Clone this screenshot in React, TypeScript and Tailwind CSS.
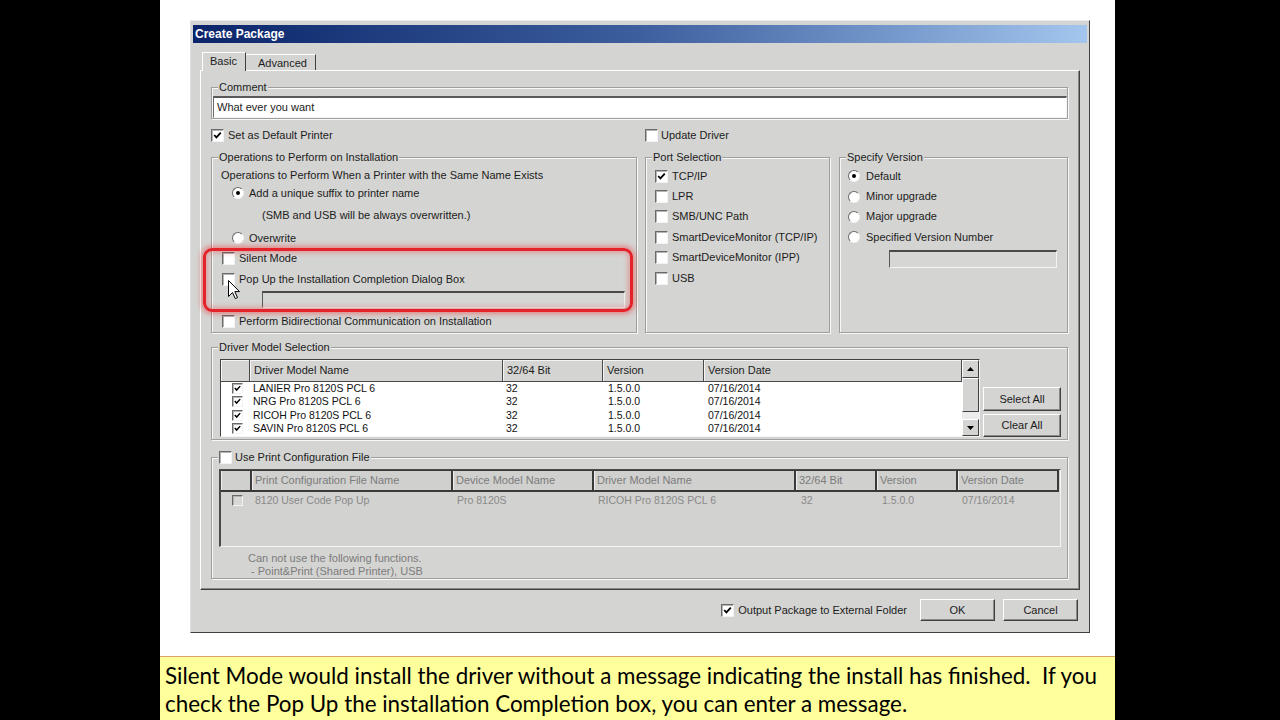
import React from "react";

function Check({ checked = false, small = false, disabled = false }: { checked?: boolean; small?: boolean; disabled?: boolean }) {
  return (
    <span
      className={`relative inline-block shrink-0 ${small ? "w-[11px] h-[11px]" : "w-[13px] h-[13px]"} ${
        disabled ? "bg-[#d8d8d6]" : "bg-white"
      } border-t border-l border-t-[#6a6a6a] border-l-[#6a6a6a] border-r border-b border-r-[#f2f2f2] border-b-[#f2f2f2] shadow-[inset_1px_1px_0_#b4b4b4]`}
    >
      {checked && (
        <svg viewBox="0 0 11 11" className="absolute inset-0 w-full h-full">
          <path d="M2.2 5 L4.4 7.4 L8.8 2.6" fill="none" stroke="#000" strokeWidth="1.8" />
        </svg>
      )}
    </span>
  );
}

function Radio({ checked = false }: { checked?: boolean }) {
  return (
    <span className="relative inline-flex items-center justify-center w-[12px] h-[12px] shrink-0 rounded-full bg-white border border-t-[#6a6a6a] border-l-[#6a6a6a] border-r-[#f2f2f2] border-b-[#f2f2f2]">
      {checked && <span className="w-[4px] h-[4px] rounded-full bg-black" />}
    </span>
  );
}

function Group({ label, className, children }: { label: React.ReactNode; className: string; children?: React.ReactNode }) {
  return (
    <div className={`relative border border-[#9e9e9c] shadow-[inset_1px_1px_0_#f8f8f8,1px_1px_0_#f8f8f8] ${className}`}>
      <div className="absolute -top-[7.5px] left-[6px] px-[1px] bg-[#d4d4d2] leading-[13px] flex items-center gap-[3px] whitespace-nowrap">
        {label}
      </div>
      {children}
    </div>
  );
}

function Button({ children, className }: { children: React.ReactNode; className: string }) {
  return (
    <div
      className={`flex items-center justify-center bg-[#d4d4d2] border border-t-white border-l-white border-r-[#404040] border-b-[#404040] shadow-[inset_-1px_-1px_0_#8a8a8a] ${className}`}
    >
      {children}
    </div>
  );
}

function SunkenBox({ className }: { className: string }) {
  return (
    <div
      className={`bg-[#d6d6d4] border-t-2 border-l border-t-[#4a4a4a] border-l-[#5a5a5a] border-r border-b border-r-[#f4f4f4] border-b-[#f4f4f4] ${className}`}
    />
  );
}

function ScrollBtn({ up, className }: { up: boolean; className: string }) {
  return (
    <div
      className={`flex items-center justify-center bg-[#d4d4d2] border border-t-white border-l-white border-r-[#404040] border-b-[#404040] ${className}`}
    >
      <svg width="7" height="4" viewBox="0 0 7 4">
        {up ? <path d="M0 4 L3.5 0 L7 4 Z" fill="#000" /> : <path d="M0 0 L3.5 4 L7 0 Z" fill="#000" />}
      </svg>
    </div>
  );
}

const drivers = ["LANIER Pro 8120S PCL 6", "NRG Pro 8120S PCL 6", "RICOH Pro 8120S PCL 6", "SAVIN Pro 8120S PCL 6"];

function HeadCell({ children, className }: { children?: React.ReactNode; className: string }) {
  return (
    <div
      className={`h-full flex items-center pl-[4px] shrink-0 border-r border-b border-r-[#4a4a4a] border-b-[#4a4a4a] shadow-[inset_1px_1px_0_#f4f4f4] bg-[#d4d4d2] whitespace-nowrap ${className}`}
    >
      {children}
    </div>
  );
}

function DarkHeadCell({ children, className }: { children?: React.ReactNode; className: string }) {
  return (
    <div
      className={`h-full flex items-center pl-[3px] shrink-0 border-r-2 border-r-[#3a3a3a] shadow-[inset_1px_0_0_#efefef] bg-[#d0d0ce] whitespace-nowrap text-[#7c7c7c] ${className}`}
    >
      {children}
    </div>
  );
}

export default function App() {
  return (
    <div className="w-[1280px] h-[720px] flex bg-black overflow-hidden">
      <div className="w-[160px] shrink-0 bg-black" />
      <div className="w-[955px] shrink-0 flex flex-col bg-white">
        <div className="h-[656px] shrink-0 pt-[20px] pl-[30px]">
          {/* Dialog */}
          <div className="w-[900px] h-[613px] flex flex-col bg-[#d4d4d2] border border-t-[#ececec] border-l-[#dedede] border-r-[#404040] border-b-[#404040] px-[2px] pt-[4px] font-['Liberation_Sans',Arial,sans-serif] text-[11px] leading-[13px] text-[#1c1c1c]">
            {/* Title bar */}
            <div className="h-[18px] shrink-0 flex items-center pl-[2px] bg-gradient-to-r from-[#0b246a] via-[#3d5f9e] to-[#a3c6ee]">
              <span className="text-white font-bold text-[12px]">Create Package</span>
            </div>

            {/* Tabs */}
            <div className="mt-[9px] h-[18px] shrink-0 flex items-end ml-[9px]">
              <div className="relative z-10 h-[19px] -mb-px w-[44px] pl-[7px] pt-[2px] bg-[#d4d4d2] border-t border-l border-t-white border-l-white border-r border-r-[#404040]">
                Basic
              </div>
              <div className="h-[16px] w-[70px] pl-[12px] pt-[2px] border-t border-t-white border-r border-r-[#404040]">Advanced</div>
            </div>

            {/* Tab panel */}
            <div className="ml-[7px] w-[880px] h-[520px] shrink-0 flex flex-col border border-t-white border-l-white border-r-[#404040] border-b-[#404040] shadow-[inset_-1px_-1px_0_#8a8a8a] pl-[10px] pt-[16px]">
              {/* Comment */}
              <Group label="Comment" className="w-[857px] h-[32px] shrink-0 pt-[8px] pl-[1px]">
                <div className="h-[22px] bg-white border-t-2 border-l border-t-[#5a5a5a] border-l-[#6a6a6a] border-r border-b border-r-[#f4f4f4] border-b-[#f4f4f4] flex items-center pl-[3px]">
                  What ever you want
                </div>
              </Group>

              {/* checkbox row */}
              <div className="mt-[9.5px] h-[13px] shrink-0 flex items-center">
                <div className="w-[434px] flex items-center gap-[4px]">
                  <Check checked />
                  <span>Set as Default Printer</span>
                </div>
                <div className="flex items-center gap-[3px]">
                  <Check />
                  <span>Update Driver</span>
                </div>
              </div>

              {/* three groups */}
              <div className="mt-[15.5px] h-[176px] shrink-0 flex">
                <Group label="Operations to Perform on Installation" className="w-[426px] h-full flex flex-col pt-[10px]">
                  <div className="h-[14px] flex items-center ml-[9px]">Operations to Perform When a Printer with the Same Name Exists</div>
                  <div className="mt-[4px] h-[14px] flex items-center ml-[20px] gap-[5px]">
                    <Radio checked />
                    <span>Add a unique suffix to printer name</span>
                  </div>
                  <div className="mt-[8px] h-[14px] flex items-center ml-[50px]">(SMB and USB will be always overwritten.)</div>
                  <div className="mt-[9px] h-[14px] flex items-center ml-[20px] gap-[5px]">
                    <Radio />
                    <span>Overwrite</span>
                  </div>
                  <div className="mt-[6px] h-[14px] flex items-center ml-[10px] gap-[4px]">
                    <Check />
                    <span>Silent Mode</span>
                  </div>
                  <div className="mt-[7px] h-[14px] flex items-center ml-[10px] gap-[4px]">
                    <Check />
                    <span>Pop Up the Installation Completion Dialog Box</span>
                  </div>
                  <SunkenBox className="mt-[5px] h-[17px] ml-[50px] w-[363px] shrink-0" />
                  <div className="mt-[6px] h-[14px] flex items-center ml-[10px] gap-[4px]">
                    <Check />
                    <span>Perform Bidirectional Communication on Installation</span>
                  </div>

                  {/* highlight */}
                  <div className="absolute left-[-9px] top-[90px] w-[430px] h-[64px] rounded-[9px] border-[3px] border-[#e4222a] shadow-[0_0_5px_2px_rgba(240,40,40,0.45),inset_0_0_5px_2px_rgba(240,40,40,0.3)] pointer-events-none" />
                  {/* cursor */}
                  <svg className="absolute left-[16px] top-[122px]" width="13" height="20" viewBox="0 0 13 20">
                    <path d="M0.5 0.5 L0.5 16.5 L4.5 12.5 L7.3 18.6 L9.5 17.6 L6.8 11.6 L11.5 11.6 Z" fill="#fff" stroke="#000" strokeWidth="1" strokeLinejoin="miter" />
                  </svg>
                </Group>

                <Group label="Port Selection" className="ml-[8px] w-[185px] h-full flex flex-col pt-[8px]">
                  {[
                    ["TCP/IP", true],
                    ["LPR", false],
                    ["SMB/UNC Path", false],
                    ["SmartDeviceMonitor (TCP/IP)", false],
                    ["SmartDeviceMonitor (IPP)", false],
                    ["USB", false],
                  ].map(([t, c]) => (
                    <div key={t as string} className="h-[20.4px] shrink-0 flex items-center ml-[9px] gap-[4px]">
                      <Check checked={c as boolean} />
                      <span>{t as string}</span>
                    </div>
                  ))}
                </Group>

                <Group label="Specify Version" className="ml-[9px] w-[229px] h-full flex flex-col pt-[8px]">
                  {["Default", "Minor upgrade", "Major upgrade", "Specified Version Number"].map((t, i) => (
                    <div key={t} className="h-[20.4px] shrink-0 flex items-center ml-[8px] gap-[6px]">
                      <Radio checked={i === 0} />
                      <span>{t}</span>
                    </div>
                  ))}
                  <SunkenBox className="mt-[2.4px] ml-[49px] w-[168px] h-[18px] shrink-0" />
                </Group>
              </div>

              {/* Driver Model Selection */}
              <Group label="Driver Model Selection" className="mt-[14px] w-[857px] h-[93px] shrink-0 flex pl-[8px] pt-[11px]">
                <div className="w-[760px] h-[78px] shrink-0 flex border border-t-[#404040] border-l-[#404040] border-r-[#f4f4f4] border-b-[#f4f4f4]">
                  <div className="w-[741px] flex flex-col overflow-hidden">
                    <div className="h-[22px] shrink-0 flex">
                      <HeadCell className="w-[29px]" />
                      <HeadCell className="w-[253px]">Driver Model Name</HeadCell>
                      <HeadCell className="w-[100px]">32/64 Bit</HeadCell>
                      <HeadCell className="w-[101px]">Version</HeadCell>
                      <HeadCell className="w-[258px]">Version Date</HeadCell>
                    </div>
                    <div className="flex-1 bg-white overflow-hidden text-[10.5px] text-[#111]">
                      {drivers.map((d) => (
                        <div key={d} className="h-[13.3px] flex items-center">
                          <div className="w-[29px] h-full flex items-center pl-[11px]">
                            <Check checked small />
                          </div>
                          <div className="w-[253px] pl-[3px] whitespace-nowrap">{d}</div>
                          <div className="w-[100px] pl-[3px]">32</div>
                          <div className="w-[101px] pl-[5px]">1.5.0.0</div>
                          <div className="w-[258px] pl-[4px]">07/16/2014</div>
                        </div>
                      ))}
                      <div className="h-[13.3px] flex items-start pt-[1px]">
                        <div className="w-[29px] pl-[11px]">
                          <Check small />
                        </div>
                      </div>
                    </div>
                  </div>
                  <div className="w-[17px] h-full flex flex-col">
                    <ScrollBtn up className="h-[18px] shrink-0" />
                    <div className="h-[34px] shrink-0 bg-[#d4d4d2] border border-t-white border-l-white border-r-[#404040] border-b-[#404040]" />
                    <div className="flex-1 bg-[#ececec]" />
                    <ScrollBtn up={false} className="h-[17px] shrink-0" />
                  </div>
                </div>
                <div className="ml-[3px] w-[78px] flex flex-col pt-[28px] gap-[3px]">
                  <Button className="h-[24px] w-[78px]">Select All</Button>
                  <Button className="h-[23px] w-[78px]">Clear All</Button>
                </div>
              </Group>

              {/* Use Print Configuration File */}
              <Group
                label={
                  <>
                    <Check />
                    <span>Use Print Configuration File</span>
                  </>
                }
                className="mt-[17px] w-[857px] h-[122px] shrink-0 flex flex-col pl-[7px] pt-[11px]"
              >
                <div className="w-[842px] h-[78px] shrink-0 flex flex-col bg-[#d2d2d0] border-l-2 border-t border-l-[#4a4a4a] border-t-[#4a4a4a] border-r border-b border-r-[#f4f4f4] border-b-[#f4f4f4]">
                  <div className="h-[22px] shrink-0 flex border-t border-b-2 border-t-[#3a3a3a] border-b-[#3a3a3a] w-[838px]">
                    <DarkHeadCell className="w-[31px]" />
                    <DarkHeadCell className="w-[201px]">Print Configuration File Name</DarkHeadCell>
                    <DarkHeadCell className="w-[141px]">Device Model Name</DarkHeadCell>
                    <DarkHeadCell className="w-[202px]">Driver Model Name</DarkHeadCell>
                    <DarkHeadCell className="w-[81px]">32/64 Bit</DarkHeadCell>
                    <DarkHeadCell className="w-[81px]">Version</DarkHeadCell>
                    <DarkHeadCell className="w-[101px]">Version Date</DarkHeadCell>
                  </div>
                  <div className="h-[14px] mt-[1px] flex items-center text-[10.5px] text-[#8a8a8a] whitespace-nowrap">
                    <div className="w-[31px] h-full flex items-center pl-[11px]">
                      <Check small disabled />
                    </div>
                    <div className="w-[201px] pl-[3px]">8120 User Code Pop Up</div>
                    <div className="w-[141px] pl-[4px]">Pro 8120S</div>
                    <div className="w-[202px] pl-[4px]">RICOH Pro 8120S PCL 6</div>
                    <div className="w-[81px] pl-[5px]">32</div>
                    <div className="w-[81px] pl-[5px]">1.5.0.0</div>
                    <div className="w-[101px] pl-[4px]">07/16/2014</div>
                  </div>
                </div>
                <div className="mt-[4.5px] ml-[29px] text-[#7c7c7c] leading-[13px]">
                  <div>Can not use the following functions.</div>
                  <div>{"\u00a0- Point&Print (Shared Printer), USB"}</div>
                </div>
              </Group>
            </div>

            {/* Bottom buttons */}
            <div className="mt-[9px] h-[22px] shrink-0 flex items-center justify-end pr-[9px]">
              <div className="flex items-center gap-[4px]">
                <Check checked />
                <span>Output Package to External Folder</span>
              </div>
              <Button className="ml-[13px] w-[75px] h-[22px]">OK</Button>
              <Button className="ml-[8px] w-[75px] h-[22px]">Cancel</Button>
            </div>
          </div>
        </div>

        {/* Caption */}
        <div className="flex-1 bg-[#ffff9c] border-t border-t-[#e0a46a] pt-[5px] pl-[5px] font-['Lato',sans-serif] text-[22.4px] leading-[28px] text-black whitespace-nowrap">
          <div>{"Silent Mode would install the driver without a message indicating the install has finished.\u00a0 If you"}</div>
          <div>check the Pop Up the installation Completion box, you can enter a message.</div>
        </div>
      </div>
      <div className="flex-1 bg-black" />
    </div>
  );
}
